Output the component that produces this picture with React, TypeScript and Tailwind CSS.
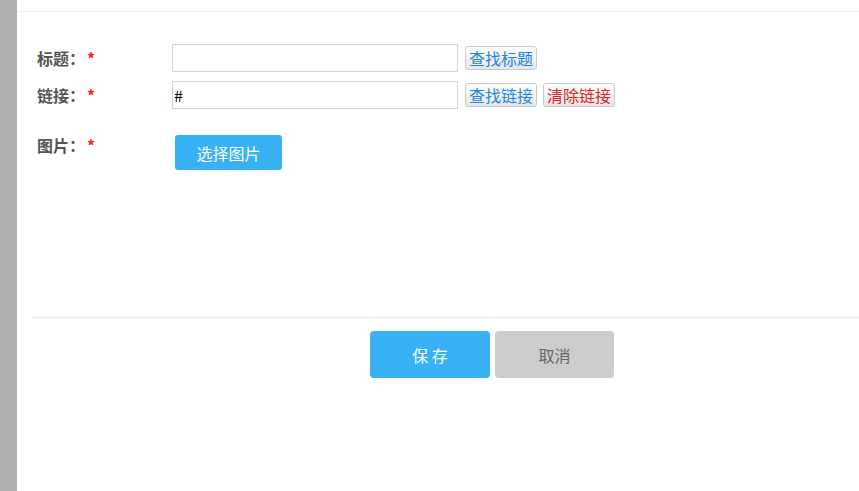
export default function App() {
  const font = "font-['Noto_Sans_CJK_SC','Liberation_Sans',sans-serif]";
  return (
    <div className={`flex w-[859px] h-[491px] bg-white ${font}`}>
      {/* left rail */}
      <div className="w-[17px] shrink-0 bg-[#b0b0b0]" />

      <div className="flex-1 flex flex-col">
        <div className="h-[12px] ml-[1px] border-b border-[#f0f0f0]" />

        {/* form */}
        <div className="pl-[20px] pt-[32px]">
          <Row label="标题">
            <input className="w-[286px] h-[28px] border border-[#d4d4d4] px-[1px] text-[16px] text-black outline-none" />
            <SmallBtn className="ml-[7px] text-[#1a86e0]">查找标题</SmallBtn>
          </Row>
          <div className="mt-[9px]">
            <Row label="链接">
              <input
                defaultValue="#"
                className="w-[286px] h-[28px] border border-[#d4d4d4] px-[1px] text-[16px] text-black outline-none"
              />
              <SmallBtn className="ml-[7px] text-[#1a86e0]">查找链接</SmallBtn>
              <SmallBtn className="ml-[6px] text-[#d7262b]">清除链接</SmallBtn>
            </Row>
          </div>
          <div className="mt-[26px] flex items-start">
            <Label text="图片" leading="leading-[20px]" />
            <button className="ml-[3px] w-[107px] h-[35px] rounded-[3px] bg-[#37b1f3] text-white text-[16px]">
              选择图片
            </button>
          </div>
        </div>

        {/* footer */}
        <div className="mt-[147px] ml-[15px] border-t border-[#ececec]" />
        <div className="pl-[353px] pt-[13px] flex gap-[5px]">
          <button className="w-[120px] h-[47px] rounded-[4px] bg-[#38b2f4] text-white text-[16px]">
            保 存
          </button>
          <button className="w-[119px] h-[47px] rounded-[4px] bg-[#cccccc] text-[#666] text-[16px]">
            取消
          </button>
        </div>
      </div>
    </div>
  );
}

function Label({ text, leading = "leading-[28px]" }: { text: string; leading?: string }) {
  return (
    <div className={`w-[135px] shrink-0 text-[16px] font-bold text-[#555] ${leading}`}>
      {text}：<span className="text-[#ff2020] ml-[2px]">*</span>
    </div>
  );
}

function Row({ label, children }: { label: string; children: React.ReactNode }) {
  return (
    <div className="flex items-center h-[28px]">
      <Label text={label} />
      {children}
    </div>
  );
}

function SmallBtn({ children, className = "" }: { children: React.ReactNode; className?: string }) {
  return (
    <button
      className={`h-[24px] px-[3px] rounded-[3px] border border-[#cacaca] bg-gradient-to-b from-[#ffffff] to-[#e6e6e6] text-[16px] leading-[20px] ${className}`}
    >
      {children}
    </button>
  );
}
